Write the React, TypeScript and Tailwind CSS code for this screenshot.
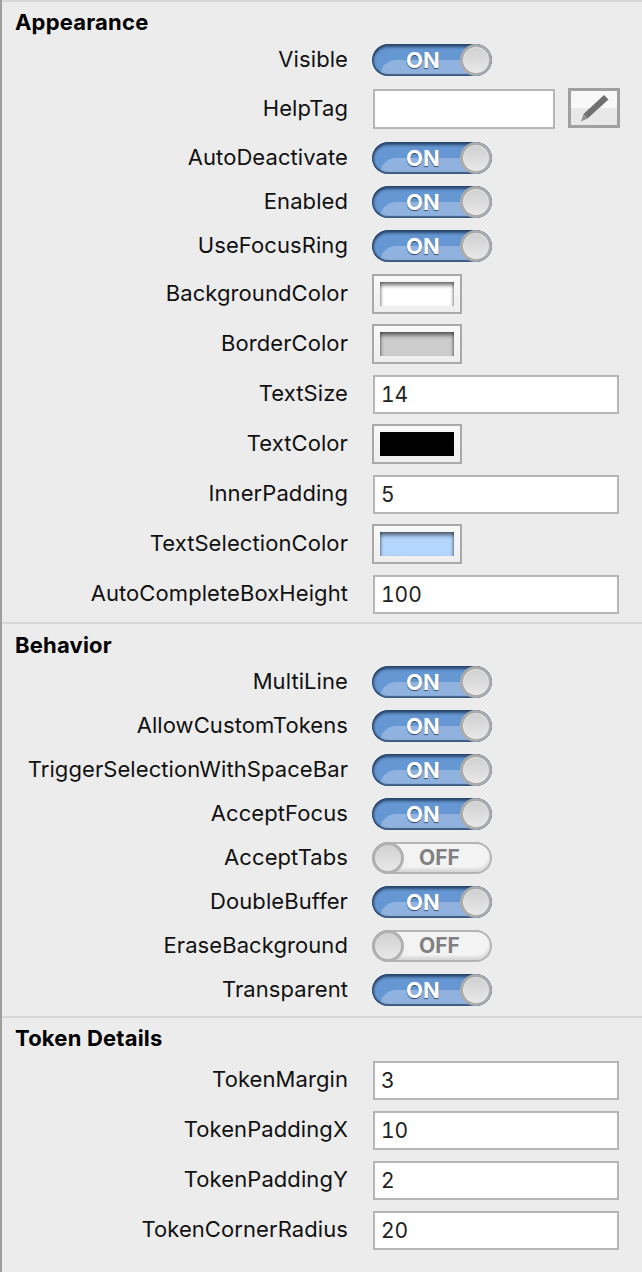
const font = "font-['Inter','Liberation_Sans',sans-serif]"

function Switch({ on }: { on: boolean }) {
  if (!on) return (
    <div className="relative w-[120px] h-8 rounded-full border-2 border-[#b4b4b4] bg-[#f3f3f3] shadow-[inset_0_-3px_3px_rgba(0,0,0,0.12)]">
      <span className="absolute left-[45px] top-[3px] leading-[22px] text-[21px] font-bold text-[#808080]">OFF</span>
      <div className="absolute left-[-2px] top-[-2px] w-8 h-8 rounded-full border-[3px] border-[#b0b0b0] bg-gradient-to-b from-[#d2d2d2] to-[#e8e8e8]" />
    </div>
  )
  return (
    <div className="relative w-[120px] h-8 rounded-full overflow-hidden bg-[#6597d2]">
      <div className="absolute left-[8px] top-[16px] w-[104px] h-4 rounded-tl-[18px] bg-[#8fb2de]" />
      <div className="absolute inset-0 rounded-full shadow-[inset_0_3px_3px_rgba(25,45,75,0.75),inset_2px_0_2px_rgba(25,45,75,0.5),inset_0_-2px_1px_rgba(45,75,115,0.8)]" />
      <span className="absolute left-[34px] top-[5px] leading-[22px] text-[22px] font-bold text-white [text-shadow:0_1px_1px_rgba(40,60,90,0.9)]">ON</span>
      <div className="absolute right-0 top-0 w-8 h-8 rounded-full border-[3px] border-[#ababab] bg-gradient-to-b from-[#d0d0d0] to-[#e8e8e8] ring-1 ring-[#f0f0f0]/60 ring-inset" />
    </div>
  )
}

function Swatch({ color }: { color: string }) {
  return (
    <div className="w-[90px] h-10 border-2 border-[#a9a9a9] bg-gradient-to-b from-[#f9f9f9] to-[#eeeeee] p-1.5">
      <div
        className="w-full h-full shadow-[inset_0_4px_4px_-1px_rgba(0,0,0,0.6),inset_3px_0_3px_-2px_rgba(0,0,0,0.3),inset_-3px_0_3px_-2px_rgba(0,0,0,0.3)]"
        style={{ backgroundColor: color }}
      />
    </div>
  )
}

function TextBox({ value, wide }: { value?: string; wide?: boolean }) {
  return (
    <div className={wide ? 'w-[246px] h-[39px] ml-px border-2 border-[#b6b6b6] bg-white pl-[6px] text-[21px] leading-[35px] text-[#222] tabular-nums' : 'w-[182px] h-10 ml-px border-2 border-[#b6b6b6] bg-white'}>
      {value}
    </div>
  )
}

function Row({ label, h, children }: { label: string; h: string; children: React.ReactNode }) {
  return (
    <div className={`flex items-center gap-6 ${h}`}>
      <div className="w-[346px] pb-0.5 text-right text-[22px] tracking-[0.08px] text-[#111]">{label}</div>
      {children}
    </div>
  )
}

function Heading({ children, h }: { children: React.ReactNode; h: string }) {
  return <h3 className={`pl-[13px] flex items-center text-[22px] tracking-[0.2px] font-bold text-black ${h}`}>{children}</h3>
}

function Divider() {
  return <div className="h-0.5 bg-[#d6d6d6]" />
}

export default function App() {
  return (
    <div className={`w-[642px] h-[1272px] bg-[#ececec] border-l-2 border-[#9e9e9e] overflow-hidden ${font}`}>
      <Divider />

      <Heading h="h-[36px] pt-1">Appearance</Heading>
      <Row label="Visible" h="h-11"><Switch on /></Row>
      <Row label="HelpTag" h="h-[54px]">
        <TextBox />
        <button className="ml-[-11px] mb-0.5 w-[52px] h-10 border-[3px] border-[#a0a0a0] bg-[linear-gradient(#f8f8f8_50%,#e8e8e8_50%)] flex items-center justify-center">
          <svg width="32" height="32" viewBox="0 0 32 32">
            <path d="M26 3 L30.5 7.5 L9.5 26.5 L5.5 22 Z" fill="#707070" />
            <path d="M5.5 22 L9.5 26.5 L3 29.5 Z" fill="#8f8f8f" />
          </svg>
        </button>
      </Row>
      <Row label="AutoDeactivate" h="h-11"><Switch on /></Row>
      <Row label="Enabled" h="h-11"><Switch on /></Row>
      <Row label="UseFocusRing" h="h-11"><Switch on /></Row>
      <div className="h-px" />
      <Row label="BackgroundColor" h="h-[50px]"><Swatch color="#ffffff" /></Row>
      <Row label="BorderColor" h="h-[50px]"><Swatch color="#cccccc" /></Row>
      <Row label="TextSize" h="h-[50px]"><TextBox wide value="14" /></Row>
      <Row label="TextColor" h="h-[50px]"><Swatch color="#000000" /></Row>
      <Row label="InnerPadding" h="h-[50px]"><TextBox wide value="5" /></Row>
      <Row label="TextSelectionColor" h="h-[50px]"><Swatch color="#b3d7ff" /></Row>
      <Row label="AutoCompleteBoxHeight" h="h-[50px]"><TextBox wide value="100" /></Row>
      <div className="h-[3px]" />
      <Divider />

      <Heading h="h-[36px] pt-1.5">Behavior</Heading>
      <Row label="MultiLine" h="h-11"><Switch on /></Row>
      <Row label="AllowCustomTokens" h="h-11"><Switch on /></Row>
      <Row label="TriggerSelectionWithSpaceBar" h="h-11"><Switch on /></Row>
      <Row label="AcceptFocus" h="h-11"><Switch on /></Row>
      <Row label="AcceptTabs" h="h-11"><Switch on={false} /></Row>
      <Row label="DoubleBuffer" h="h-11"><Switch on /></Row>
      <Row label="EraseBackground" h="h-11"><Switch on={false} /></Row>
      <Row label="Transparent" h="h-11"><Switch on /></Row>
      <div className="h-1" />
      <Divider />

      <Heading h="h-[37px] pt-1">Token Details</Heading>
      <Row label="TokenMargin" h="h-[50px]"><TextBox wide value="3" /></Row>
      <Row label="TokenPaddingX" h="h-[50px]"><TextBox wide value="10" /></Row>
      <Row label="TokenPaddingY" h="h-[50px]"><TextBox wide value="2" /></Row>
      <Row label="TokenCornerRadius" h="h-[50px]"><TextBox wide value="20" /></Row>
    </div>
  )
}
